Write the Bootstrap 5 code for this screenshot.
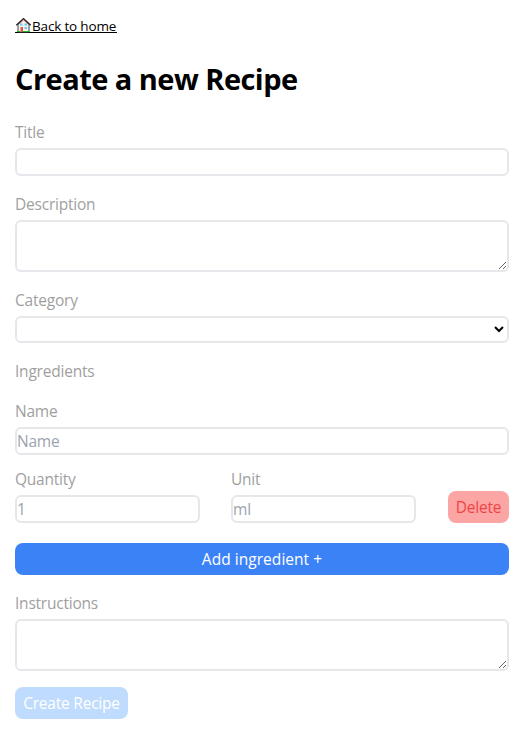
<!DOCTYPE html>
<html lang="en">
<head>
<meta charset="utf-8">
<meta name="viewport" content="width=device-width, initial-scale=1">
<title>Create a new Recipe</title>
<link href="https://cdn.jsdelivr.net/npm/bootstrap@5.3.0/dist/css/bootstrap.min.css" rel="stylesheet">
<style>
body { font-family: "Open Sans", "Noto Sans", sans-serif; font-size: 15.5px; line-height: 24px; letter-spacing: -.22px; color: #000; background: #fff; }
.page { padding: 16px 21px 0 15px; }
.home-link { width: 102px; height: 17px; font-size: 13.5px; line-height: 20px; letter-spacing: -.17px; color: #000; border-bottom: 1px solid #000; }
.home-link:hover { color: #000; }
.title-main { margin: 28px 0 23px; font-size: 29px; line-height: 36px; font-weight: 700; letter-spacing: -.53px; }
.field-label { display: block; height: 24px; margin-bottom: 4px; color: #9f9f9f; white-space: nowrap; }
.field { display: block; width: 100%; height: 28px; padding: 0; border: 2px solid #e5e7eb; border-radius: 6px; background: #fff; color: #000; line-height: 24px; letter-spacing: inherit; }
.field::placeholder { color: #9ca3af; opacity: 1; }
textarea.field { height: 52px; resize: both; }
select.field { height: 27px; padding-right: 1px; }
.amounts { gap: 31px; }
.unit-col { margin-right: 1px; }
.action { height: 32px; padding: 4px 0; border: 0; border-radius: 8px; font-size: 15.5px; line-height: 24px; letter-spacing: inherit; white-space: nowrap; }
.action-delete, .action-delete:hover { width: 61px; background: #fca5a5; color: #ef4444; }
.action-add, .action-add:hover { margin-top: 20px; background: #3b82f6; color: #fff; letter-spacing: .04px; }
.action-create, .action-create:disabled { width: 113px; background: #bfdbfe; color: #fff; opacity: 1; }
</style>
</head>
<body>
<main class="page">
  <a href="#" class="home-link d-flex text-decoration-none">
    <svg class="flex-shrink-0" width="17" height="17" viewBox="0 0 17 17" aria-hidden="true">
      <path d="M3 8 8.500 3 14 8v8H3z" fill="#f2f2f2" stroke="#444" stroke-width="1"/>
      <path d="M1.300 9.300 8.500 2.600 15.700 9.300" fill="none" stroke="#292020" stroke-width="1.300"/>
      <path d="M3.800 8.100 8.500 3.800l4.700 4.300" fill="none" stroke="#b64a3d" stroke-width=".8"/>
      <path d="M5 7.500h2.500v2H5zM9.500 7.500h2.500v2H9.500zM9.500 11h2.500v2H9.500z" fill="#62cceb"/>
      <path d="M5.500 11H8v5H5.500z" fill="#e45443"/>
      <path d="M2 15h3v1H2zM8 15h7v1H8z" fill="#20b526"/>
    </svg>
    <span class="text-nowrap">Back to home</span>
  </a>
  <h1 class="title-main text-nowrap">Create a new Recipe</h1>
  <form>
    <div class="mb-3">
      <label class="field-label" for="title">Title</label>
      <input class="field" id="title" type="text">
    </div>
    <div class="mb-3">
      <label class="field-label" for="description">Description</label>
      <textarea class="field" id="description"></textarea>
    </div>
    <div class="mb-3">
      <label class="field-label" for="category">Category</label>
      <select class="field" id="category"><option></option></select>
    </div>
    <div class="field-label mb-3">Ingredients</div>
    <div>
      <label class="field-label" for="name">Name</label>
      <input class="field" id="name" type="text" placeholder="Name">
    </div>
    <div class="amounts d-flex align-items-end mt-2 pt-1">
      <div class="flex-fill w-50">
        <label class="field-label" for="quantity">Quantity</label>
        <input class="field" id="quantity" type="text" placeholder="1">
      </div>
      <div class="unit-col flex-fill w-50">
        <label class="field-label" for="unit">Unit</label>
        <input class="field" id="unit" type="text" placeholder="ml">
      </div>
      <button class="btn action action-delete flex-shrink-0" type="button">Delete</button>
    </div>
    <button class="btn action action-add w-100 d-block mb-3" type="button">Add ingredient +</button>
    <div class="mb-3">
      <label class="field-label" for="instructions">Instructions</label>
      <textarea class="field" id="instructions"></textarea>
    </div>
    <button class="btn action action-create d-block" type="submit" disabled>Create Recipe</button>
  </form>
</main>
<script src="https://cdn.jsdelivr.net/npm/bootstrap@5.3.0/dist/js/bootstrap.bundle.min.js"></script>
</body>
</html>
